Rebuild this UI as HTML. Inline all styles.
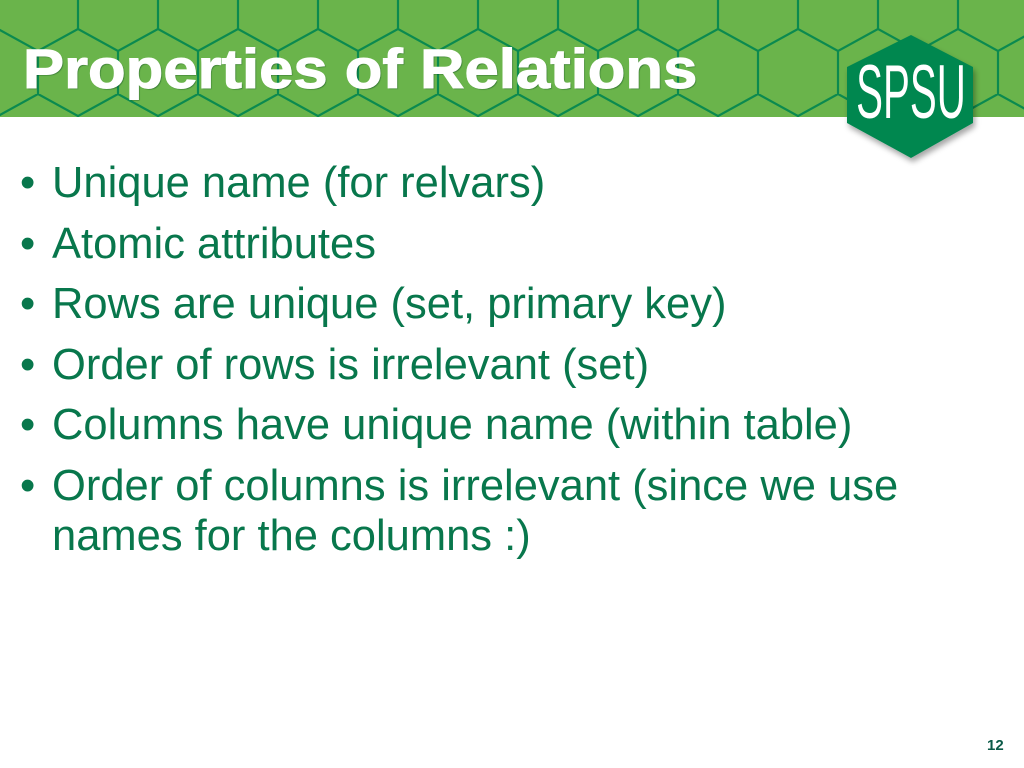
<!DOCTYPE html>
<html><head><meta charset="utf-8"><style>
html,body{margin:0;padding:0}
body{width:1024px;height:768px;position:relative;overflow:hidden;background:#fff;font-family:"Liberation Sans",Arial,sans-serif}
#hdr{position:absolute;left:0;top:0;width:1024px;height:117px}
#title{position:absolute;left:23px;top:36px;font-size:56px;font-weight:bold;color:#fff;white-space:nowrap;transform-origin:0 0;transform:scaleX(1.1);-webkit-text-stroke:1px #fff;text-shadow:1px 1px 1px rgba(0,60,30,0.5)}
ul{position:absolute;left:0;top:0;margin:0;padding:0;list-style:none}
li{position:absolute;left:20px;font-size:43.5px;color:#08774c;white-space:nowrap;line-height:50px}
li span{position:absolute;left:0}
li div{margin-left:32px}
#pg{position:absolute;left:987px;top:737px;font-size:15px;font-weight:bold;color:#0b5a48}
</style></head><body>
<svg id="hdr" width="1024" height="117" viewBox="0 0 1024 117">
<defs>
<pattern id="hx" width="80" height="130" patternUnits="userSpaceOnUse" x="-2" y="-36">
<path d="M0 22 L40 0 L80 22 M0 22 L0 65 M80 22 L80 65 M0 65 L40 87 L80 65 M40 87 L40 130" fill="none" stroke="#0b8a4f" stroke-width="2.2"/>
</pattern>
<filter id="sh" x="-30%" y="-30%" width="160%" height="160%"><feDropShadow dx="2" dy="4" stdDeviation="3" flood-color="#000" flood-opacity="0.35"/></filter>
</defs>
<rect width="1024" height="117" fill="#6ab44b"/>
<rect width="1024" height="117" fill="url(#hx)"/>
</svg>
<div id="title">Properties of Relations</div>
<svg style="position:absolute;left:835px;top:25px" width="150" height="150">
<polygon points="76,10 138,42 138,98 76,133 12,98 12,42" fill="#00874f" filter="url(#sh)"/>
<text x="76" y="93" text-anchor="middle" fill="#fff" font-family="'Liberation Sans Narrow','Liberation Sans',sans-serif" font-size="76" transform="translate(76 0) scale(0.53 1) translate(-76 0)">SPSU</text>
</svg>
<ul>
<li style="top:158px"><span>•</span><div>Unique name (for relvars)</div></li>
<li style="top:219px"><span>•</span><div>Atomic attributes</div></li>
<li style="top:279px"><span>•</span><div>Rows are unique (set, primary key)</div></li>
<li style="top:340px"><span>•</span><div>Order of rows is irrelevant (set)</div></li>
<li style="top:400px"><span>•</span><div>Columns have unique name (within table)</div></li>
<li style="top:461px"><span>•</span><div>Order of columns is irrelevant (since we use<br>names for the columns :)</div></li>
</ul>
<div id="pg">12</div>
</body></html>
